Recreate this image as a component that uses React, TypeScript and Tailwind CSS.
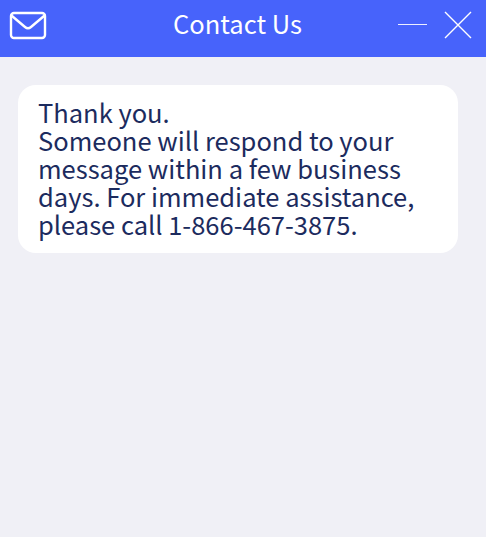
export default function App() {
  return (
    <div className="w-[486px] h-[537px] bg-[#f0f0f6] font-['Noto_Sans_CJK_SC',sans-serif] overflow-hidden">
      <header className="h-[57px] bg-[#4763fb] flex items-center justify-between pl-[9px] pr-[14px] pb-[8px] text-white">
        <svg width="38" height="30" viewBox="0 0 38 30" fill="none" stroke="currentColor" strokeWidth="2.4" strokeLinecap="round" strokeLinejoin="round">
          <rect x="2" y="3" width="34" height="25" rx="3" />
          <path d="M3 6 L16 17 Q19 19.5 22 17 L35 6" />
        </svg>
        <h1 className="text-[25.5px] leading-none font-normal ml-[30px] mb-[3px]">Contact Us</h1>
        <div className="flex items-center gap-[17px]">
          <div className="w-[29px] h-[1.5px] bg-white/90" />
          <svg width="28" height="28" viewBox="0 0 28 28" fill="none" stroke="currentColor" strokeWidth="1.4">
            <path d="M1 1 L27 27 M27 1 L1 27" />
          </svg>
        </div>
      </header>
      <main className="pt-[28px] pl-[18px]">
        <div className="w-[440px] h-[168px] bg-white rounded-[18px] pt-[13px] pl-[20px] pr-[30px] text-[25.5px] leading-[28px] text-[#1c2b5e]">
          Thank you.
          <br />
          Someone will respond to your message within a few business days. For immediate assistance, please call 1-866-467-3875.
        </div>
      </main>
    </div>
  );
}
